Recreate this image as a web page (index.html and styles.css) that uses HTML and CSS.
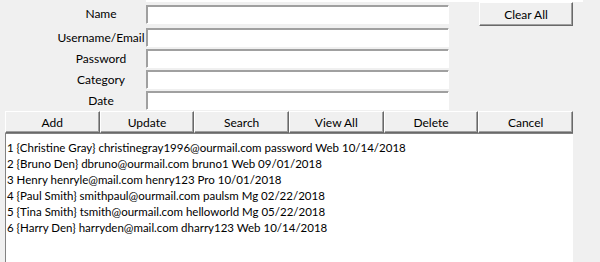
FILE: index.html
```html
<!DOCTYPE html>
<html lang="en">
<head>
  <meta charset="UTF-8" />
  <title>Password Manager</title>
  <link rel="stylesheet" href="styles.css">
</head>
<body>

<div class="strip"></div>

<!-- entry form + clear button -->
<div class="form">
  <label class="lbl r0">Name</label>
  <input class="entry r0" type="text">
  <button class="btn clear">Clear All</button>

  <label class="lbl">Username/Email</label>
  <input class="entry" type="text">

  <label class="lbl">Password</label>
  <input class="entry" type="text">

  <label class="lbl">Category</label>
  <input class="entry" type="text">

  <label class="lbl">Date</label>
  <input class="entry" type="text">
</div>

<!-- action row -->
<div class="actions">
  <button class="btn">Add</button>
  <button class="btn">Update</button>
  <button class="btn">Search</button>
  <button class="btn">View All</button>
  <button class="btn">Delete</button>
  <button class="btn">Cancel</button>
</div>

<!-- records -->
<ul class="listbox">
  <li>1 {Christine Gray} christinegray1996@ourmail.com password Web 10/14/2018</li>
  <li>2 {Bruno Den} dbruno@ourmail.com bruno1 Web 09/01/2018</li>
  <li>3 Henry henryle@mail.com henry123 Pro 10/01/2018</li>
  <li>4 {Paul Smith} smithpaul@ourmail.com paulsm Mg 02/22/2018</li>
  <li>5 {Tina Smith} tsmith@ourmail.com helloworld Mg 05/22/2018</li>
  <li>6 {Harry Den} harryden@mail.com dharry123 Web 10/14/2018</li>
</ul>

</body>
</html>
```

FILE: styles.css
```css
*       { box-sizing:border-box; margin:0; padding:0; }
html,body { height:100%; }
body    { background:#f0f0f0; color:#000; font-family:Lato,'Open Sans',sans-serif;
          font-size:12px; overflow:hidden; position:relative; }

.strip  { position:absolute; top:0; left:146px; width:437px; height:2px; background:#fff; }

.form   { display:grid; grid-template-columns:56px 90px 303px 30px 94px;
          grid-template-rows:27px repeat(4,21px); }
.lbl    { grid-column:2; text-align:center; align-self:center; white-space:nowrap;
          line-height:16px; }
.entry  { grid-column:3; height:19px; align-self:center; background:#fff;
          border:1px solid #fff; border-top-color:#a0a0a0; border-left-color:#a0a0a0;
          box-shadow:inset 1px 1px #a0a0a0; outline:none; font:inherit; padding:0 3px; }
.r0     { margin-top:1px; }

.btn    { background:#f0f0f0; font:inherit; color:#000; cursor:pointer;
          border:1px solid #fff; border-right-color:#696969; border-bottom-color:#696969;
          box-shadow:inset -1px -1px #a0a0a0; }
.clear  { grid-column:5; grid-row:1; height:24px; margin-top:2px; align-self:start; }

.actions { display:grid; grid-template-columns:repeat(6,1fr); width:568px; margin-left:5px;
           height:22px; }

.listbox { list-style:none; background:#fff; width:568px; margin-left:5px; height:140px;
           border-top:1px solid #828282; border-left:1px solid #828282; padding:6px 1px;
           font-size:11.5px; }
.listbox li { line-height:16px; white-space:nowrap; }
```
